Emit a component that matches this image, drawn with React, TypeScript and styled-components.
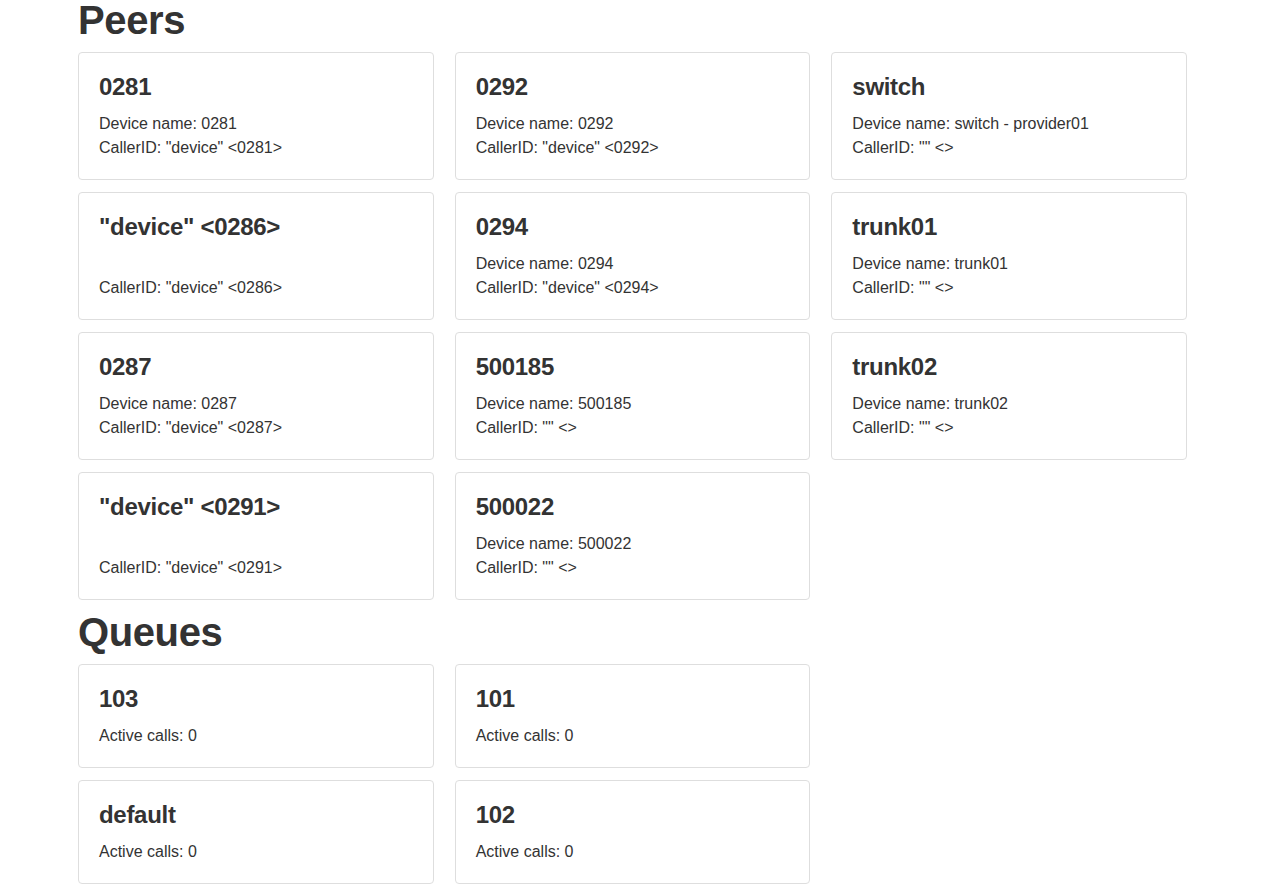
import React from "react";
import styled, { createGlobalStyle } from "styled-components";

const GlobalStyle = createGlobalStyle`
  html, body { margin: 0; padding: 0; background: #fff; }
  body {
    font-family: "Liberation Sans", Arial, Helvetica, sans-serif;
    font-size: 16px;
    line-height: 24px;
    color: #333;
  }
`;

const Container = styled.div`
  width: 1109px;
  margin: 0 auto;
`;

const Heading = styled.h1`
  margin: 0 0 12px;
  font-size: 40px;
  line-height: 40px;
  font-weight: 700;
  color: #333;
  letter-spacing: -0.4px;
`;

const Grid = styled.div<{ $cols: number }>`
  display: grid;
  grid-template-columns: repeat(3, 1fr);
  column-gap: 21px;
  row-gap: 12px;
  margin-bottom: 12px;
  & > * {
    grid-column: auto;
  }
  ${(p) => (p.$cols < 3 ? `& > :nth-child(${p.$cols}n + 1) { grid-column: 1; }` : "")}
`;

const Card = styled.div`
  border: 1px solid #dedede;
  border-radius: 4px;
  padding: 21px 20px 19px;
  background: #fff;
`;

const CardTitle = styled.h4`
  margin: 0 0 12px;
  font-size: 24px;
  line-height: 26px;
  font-weight: 700;
  color: #333;
  letter-spacing: -0.3px;
`;

const CardLine = styled.div`
  font-size: 16px;
  line-height: 24px;
  min-height: 24px;
  color: #333;
`;

type Peer = { title: string; device: string | null; caller: string };

const peers: Peer[] = [
  { title: "0281", device: "0281", caller: '"device" <0281>' },
  { title: "0292", device: "0292", caller: '"device" <0292>' },
  { title: "switch", device: "switch - provider01", caller: '"" <>' },
  { title: '"device" <0286>', device: null, caller: '"device" <0286>' },
  { title: "0294", device: "0294", caller: '"device" <0294>' },
  { title: "trunk01", device: "trunk01", caller: '"" <>' },
  { title: "0287", device: "0287", caller: '"device" <0287>' },
  { title: "500185", device: "500185", caller: '"" <>' },
  { title: "trunk02", device: "trunk02", caller: '"" <>' },
  { title: '"device" <0291>', device: null, caller: '"device" <0291>' },
  { title: "500022", device: "500022", caller: '"" <>' },
];

const queues = [
  { title: "103", active: 0 },
  { title: "101", active: 0 },
  { title: "default", active: 0 },
  { title: "102", active: 0 },
];

export default function App() {
  return (
    <>
      <GlobalStyle />
      <Container>
        <Heading>Peers</Heading>
        <Grid $cols={3}>
          {peers.map((p, i) => (
            <Card key={i}>
              <CardTitle>{p.title}</CardTitle>
              <CardLine>{p.device !== null ? `Device name: ${p.device}` : ""}</CardLine>
              <CardLine>CallerID: {p.caller}</CardLine>
            </Card>
          ))}
        </Grid>
        <Heading>Queues</Heading>
        <Grid $cols={2}>
          {queues.map((q, i) => (
            <Card key={i}>
              <CardTitle>{q.title}</CardTitle>
              <CardLine>Active calls: {q.active}</CardLine>
            </Card>
          ))}
        </Grid>
      </Container>
    </>
  );
}
